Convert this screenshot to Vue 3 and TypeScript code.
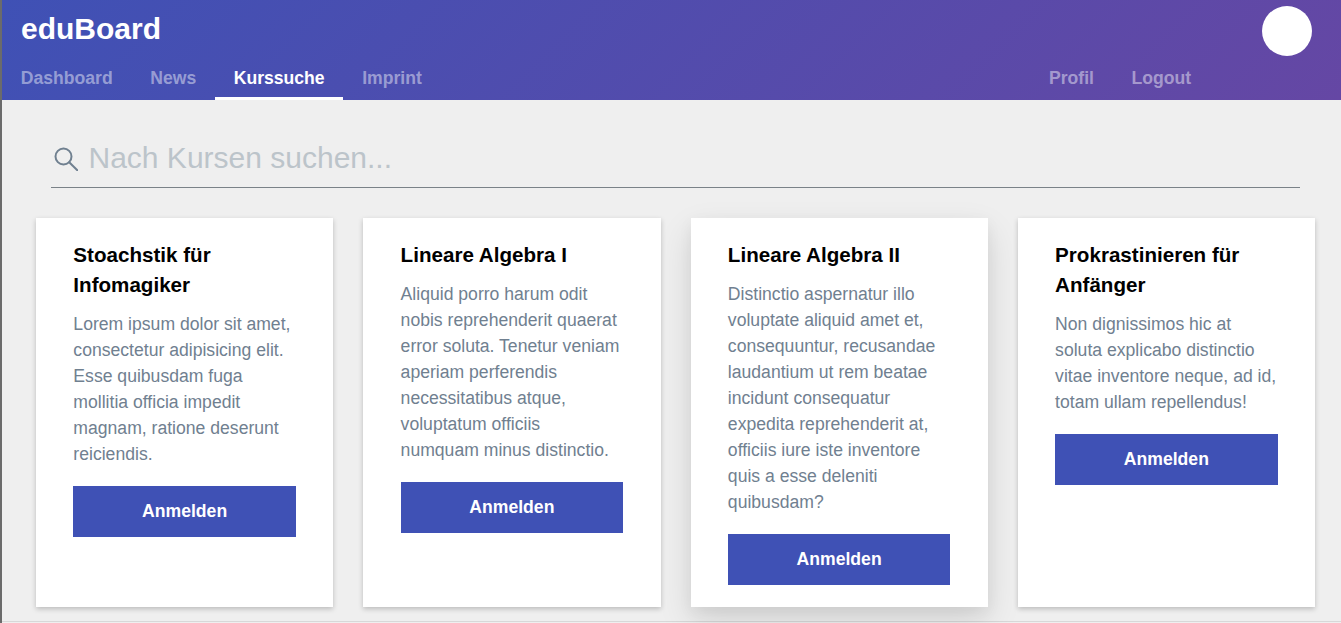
<template>
  <div class="page">
    <header class="topbar">
      <div class="brand-row">
        <h1 class="brand">eduBoard</h1>
        <div class="avatar"></div>
      </div>
      <nav class="nav">
        <div class="nav-group">
          <a v-for="link in mainLinks" :key="link" class="nav-link" :class="{ active: link === 'Kurssuche' }">{{ link }}</a>
        </div>
        <div class="nav-group">
          <a v-for="link in userLinks" :key="link" class="nav-link">{{ link }}</a>
        </div>
      </nav>
    </header>

    <main class="content">
      <label class="search">
        <svg class="search-icon" width="24" height="24" viewBox="0 0 24 24" fill="none" stroke="#708090" stroke-width="2">
          <circle cx="9.5" cy="9.5" r="8" />
          <path d="M15.2 15.2L23.3 23.3" stroke-linecap="round" />
        </svg>
        <input class="search-input" type="text" placeholder="Nach Kursen suchen..." />
      </label>

      <section class="courses">
        <article v-for="course in courses" :key="course.title" class="card" :class="{ raised: course.raised }">
          <h2 class="card-title">{{ course.title }}</h2>
          <p class="card-text">{{ course.text }}</p>
          <button class="enroll" type="button">Anmelden</button>
        </article>
      </section>
    </main>
  </div>
</template>

<script setup lang="ts">
interface ICourse {
  title: string;
  text: string;
  raised?: boolean;
}

const mainLinks: string[] = ['Dashboard', 'News', 'Kurssuche', 'Imprint'];
const userLinks: string[] = ['Profil', 'Logout'];

const courses: ICourse[] = [
  {
    title: 'Stoachstik für Infomagiker',
    text: 'Lorem ipsum dolor sit amet, consectetur adipisicing elit. Esse quibusdam fuga mollitia officia impedit magnam, ratione deserunt reiciendis.',
  },
  {
    title: 'Lineare Algebra I',
    text: 'Aliquid porro harum odit nobis reprehenderit quaerat error soluta. Tenetur veniam aperiam perferendis necessitatibus atque, voluptatum officiis numquam minus distinctio.',
  },
  {
    title: 'Lineare Algebra II',
    text: 'Distinctio aspernatur illo voluptate aliquid amet et, consequuntur, recusandae laudantium ut rem beatae incidunt consequatur expedita reprehenderit at, officiis iure iste inventore quis a esse deleniti quibusdam?',
    raised: true,
  },
  {
    title: 'Prokrastinieren für Anfänger',
    text: 'Non dignissimos hic at soluta explicabo distinctio vitae inventore neque, ad id, totam ullam repellendus!',
  },
];
</script>

<style>
html,
body {
  margin: 0;
  background: #efefef;
}
</style>

<style scoped>
.page {
  height: 623px;
  box-sizing: border-box;
  overflow: hidden;
  border-left: 2px solid #6b6b6b;
  background: #efefef;
  font-family: 'Liberation Sans', Arial, sans-serif;
}

.topbar {
  height: 100px;
  display: flex;
  flex-direction: column;
  background: linear-gradient(135deg, #3f51b5, #6547a4);
}

.brand-row {
  height: 56px;
  display: flex;
  justify-content: space-between;
  padding: 6px 29px 0 19px;
  box-sizing: border-box;
}

.brand {
  margin: 0;
  font-size: 30px;
  line-height: 46px;
  font-weight: 700;
  color: #fff;
}

.avatar {
  width: 50px;
  height: 50px;
  border-radius: 50%;
  background: #fff;
}

.nav {
  flex: 1;
  display: flex;
  justify-content: space-between;
  padding-right: 131.2px;
}

.nav-group {
  display: flex;
}

.nav-link {
  height: 44px;
  padding: 0 18.78px;
  font-size: 17.6px;
  font-weight: 700;
  line-height: 44px;
  color: rgba(255, 255, 255, 0.45);
  box-sizing: border-box;
}

.nav-link.active {
  color: #fff;
  border-bottom: 3px solid #fff;
}

.content {
  height: 522px;
  box-sizing: border-box;
  padding: 0 26px 0 34px;
  border-bottom: 1px solid #d8d8d8;
}

.search {
  display: flex;
  align-items: center;
  height: 88px;
  margin: 0 15px 30px 15px;
  border-bottom: 1px solid #7a8288;
  box-sizing: border-box;
  padding-top: 29px;
}

.search-icon {
  margin: 2px 0 0 3px;
  flex: none;
}

.search-input {
  flex: 1;
  margin-left: 10.5px;
  padding: 0;
  border: 0;
  outline: 0;
  background: transparent;
  font-family: inherit;
  font-size: 30px;
  color: #333;
}

.search-input::placeholder {
  color: #bcc4ca;
  opacity: 1;
}

.courses {
  display: grid;
  grid-template-columns: repeat(4, 1fr);
  gap: 30px;
}

.card {
  padding: 22px 37.37px;
  background: #fff;
  box-shadow: 0 2px 5px rgba(0, 0, 0, 0.22);
}

.card.raised {
  box-shadow: 0 14px 32px rgba(0, 0, 0, 0.12), 0 5px 14px rgba(0, 0, 0, 0.05);
}

.card-title {
  margin: 0 0 11px;
  font-size: 20.6px;
  line-height: 30px;
  font-weight: 700;
  color: #000;
}

.card-text {
  margin: 0 0 19px;
  font-size: 17.6px;
  line-height: 26px;
  color: #708090;
}

.enroll {
  display: block;
  width: 100%;
  height: 51px;
  padding: 0;
  border: 0;
  background: #3f51b5;
  font-family: inherit;
  font-size: 17.6px;
  font-weight: 700;
  color: #fff;
}
</style>
